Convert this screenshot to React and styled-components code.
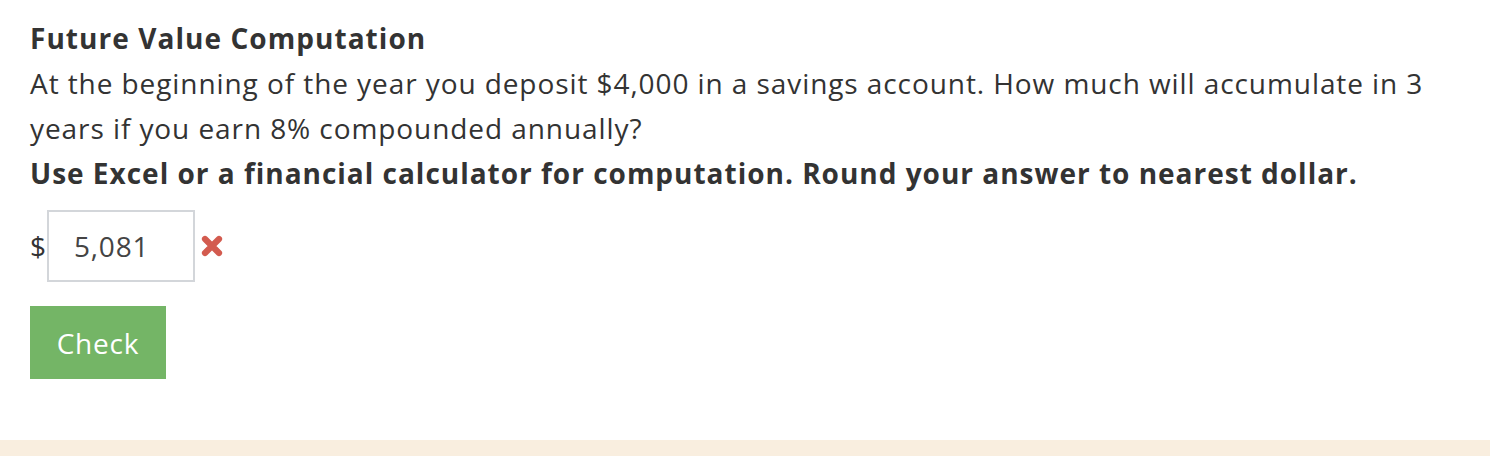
import React from "react";
import styled, { createGlobalStyle } from "styled-components";

const Global = createGlobalStyle`
  html, body { margin: 0; padding: 0; background: #fff; }
  body { font-family: "Open Sans", "Liberation Sans", sans-serif; color: #333; }
`;

const Page = styled.div`
  display: flex;
  flex-direction: column;
  min-height: 456px;
`;

const Content = styled.div`
  flex: 1;
  padding: 16px 30px 0 30px;
  width: 1410px;
`;

const Title = styled.div`
  font-weight: 700;
  font-size: 28px;
  line-height: 45px;
  letter-spacing: 1.05px;
`;

const Para = styled.p`
  margin: 0;
  font-size: 28px;
  line-height: 45px;
  font-weight: ${(p) => (p.$bold ? 700 : 400)};
  letter-spacing: ${(p) => (p.$bold ? "0.99px" : "0.92px")};
`;

const AnswerRow = styled.div`
  display: flex;
  align-items: center;
  margin-top: 14px;
  font-size: 28px;
`;

const Dollar = styled.span`
  margin-right: 1px;
`;

const Input = styled.input`
  box-sizing: border-box;
  width: 148px;
  height: 72px;
  border: 2px solid #d3d6da;
  padding: 0 0 0 25px;
  font-family: inherit;
  font-size: 28px;
  letter-spacing: 0.8px;
  color: #444;
  outline: none;
`;

const Wrong = styled.svg`
  margin-left: 6px;
  width: 22px;
  height: 22px;
`;

const CheckButton = styled.button`
  margin-top: 24px;
  width: 136px;
  height: 73px;
  border: none;
  background: #74b566;
  color: #fff;
  font-family: inherit;
  font-size: 28px;
  letter-spacing: 0.8px;
  cursor: pointer;
`;

const Footer = styled.div`
  height: 16px;
  background: #f9eedf;
`;

export default function App() {
  return (
    <Page>
      <Global />
      <Content>
        <Title>Future Value Computation</Title>
        <Para>
          At the beginning of the year you deposit $4,000 in a savings account. How much will accumulate in 3
          years if you earn 8% compounded annually?
        </Para>
        <Para $bold>Use Excel or a financial calculator for computation. Round your answer to nearest dollar.</Para>
        <AnswerRow>
          <Dollar>$</Dollar>
          <Input defaultValue="5,081" />
          <Wrong viewBox="0 0 22 22">
            <path d="M4 4 L18 18 M18 4 L4 18" stroke="#d35b4f" strokeWidth="6.2" strokeLinecap="round" />
          </Wrong>
        </AnswerRow>
        <CheckButton>Check</CheckButton>
      </Content>
      <Footer />
    </Page>
  );
}
